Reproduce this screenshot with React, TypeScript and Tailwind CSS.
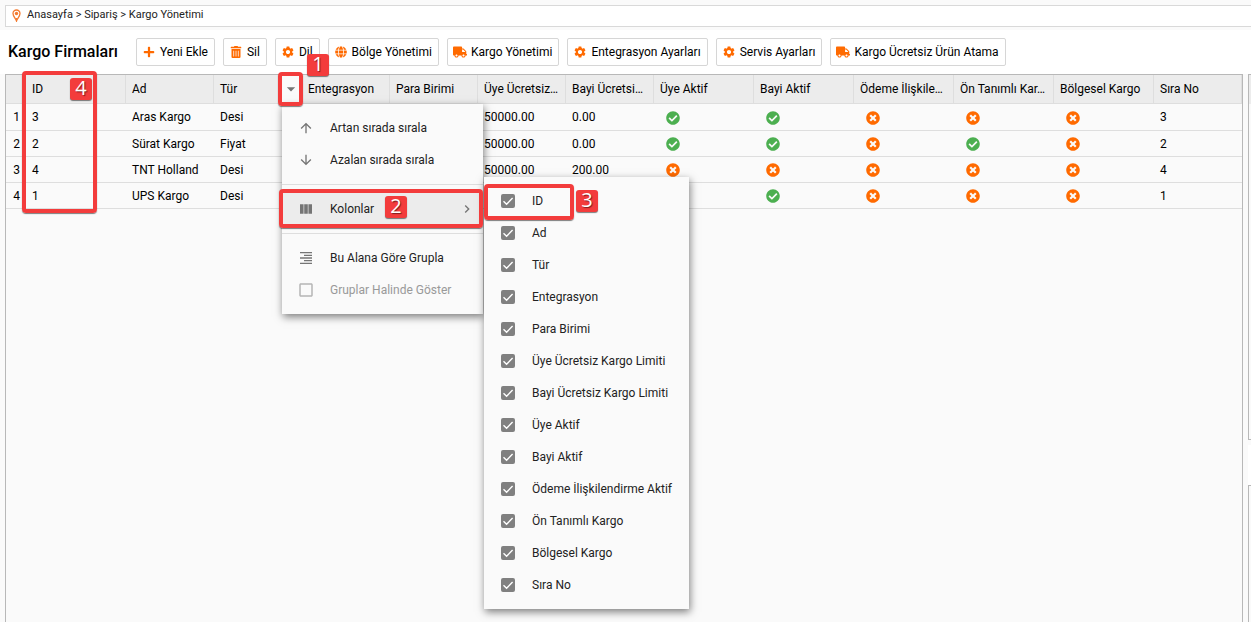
import type { ReactNode } from "react";
import { FaCheckCircle, FaGlobe, FaPlus, FaTimesCircle, FaTrashAlt, FaTruck } from "react-icons/fa";
import {
  MdArrowDownward,
  MdArrowDropDown,
  MdArrowUpward,
  MdCheckBoxOutlineBlank,
  MdChevronRight,
  MdFormatAlignRight,
  MdSettings,
  MdViewColumn,
} from "react-icons/md";
import { clsx } from "clsx";

const actions = [
  { label: "Yeni Ekle", icon: <FaPlus size={12} /> },
  { label: "Sil", icon: <FaTrashAlt size={12} /> },
  { label: "Dil", icon: <MdSettings size={14} /> },
  { label: "Bölge Yönetimi", icon: <FaGlobe size={12} /> },
  { label: "Kargo Yönetimi", icon: <FaTruck size={14} /> },
  { label: "Entegrasyon Ayarları", icon: <MdSettings size={14} /> },
  { label: "Servis Ayarları", icon: <MdSettings size={14} /> },
  { label: "Kargo Ücretsiz Ürün Atama", icon: <FaTruck size={14} /> },
];

// short is the heading used where the full label does not fit its column
const columns = [
  { label: "ID", width: "w-[100px]" },
  { label: "Ad", width: "w-[88px]" },
  { label: "Tür", width: "w-[88px]" },
  { label: "Entegrasyon", width: "w-[88px]" },
  { label: "Para Birimi", width: "w-[88px]" },
  { label: "Üye Ücretsiz Kargo Limiti", short: "Üye Ücretsiz…", width: "w-[88px]" },
  { label: "Bayi Ücretsiz Kargo Limiti", short: "Bayi Ücretsi…", width: "w-[88px]" },
  { label: "Üye Aktif", width: "w-[100px]" },
  { label: "Bayi Aktif", width: "w-[100px]" },
  { label: "Ödeme İlişkilendirme Aktif", short: "Ödeme İlişkile…", width: "w-[100px]" },
  { label: "Ön Tanımlı Kargo", short: "Ön Tanımlı Kar…", width: "w-[100px]" },
  { label: "Bölgesel Kargo", width: "w-[100px]" },
  { label: "Sıra No", width: "" },
];

const rows: (string | boolean)[][] = [
  ["3", "Aras Kargo", "Desi", "", "", "50000.00", "0.00", true, true, false, false, false, "3"],
  ["2", "Sürat Kargo", "Fiyat", "", "", "50000.00", "0.00", true, true, false, true, false, "2"],
  ["4", "TNT Holland", "Desi", "", "", "50000.00", "200.00", false, false, false, false, false, "4"],
  ["1", "UPS Kargo", "Desi", "", "", "", "", true, true, false, false, false, "1"],
];

function PinIcon() {
  return (
    <svg width="9" height="13" viewBox="0 0 9 13" fill="none" aria-hidden="true">
      <path
        d="M4.5 12C3.8 9.6 1 7.4 1 4.5a3.5 3.5 0 0 1 7 0C8 7.4 5.2 9.6 4.5 12Z"
        stroke="#f47b30"
        strokeWidth="1.3"
      />
      <circle cx="4.5" cy="4.5" r="1.7" fill="#f47b30" />
      <path d="M3.6 9h1.8L4.5 12.5Z" fill="#f47b30" />
    </svg>
  );
}

function Breadcrumb() {
  return (
    <nav className="mt-[5px] ml-[5px] flex h-[22px] items-center gap-[6px] border-y border-l border-[#d9d9d9] bg-white pl-[6px] pb-[2px] text-[11px] text-[#222]">
      <PinIcon />
      <span>
        <a href="#anasayfa">Anasayfa</a> &gt; <a href="#siparis">Sipariş</a> &gt;{" "}
        <a href="#kargo">Kargo Yönetimi</a>
      </span>
    </nav>
  );
}

function Toolbar() {
  return (
    <header className="mt-[3px] flex h-11 items-center gap-2 bg-white px-2">
      <h1 className="mr-[10px] text-[16px] font-medium whitespace-nowrap">Kargo Firmaları</h1>
      {actions.map((a) => (
        <button
          key={a.label}
          type="button"
          className="flex h-7 shrink-0 items-center gap-1 rounded-xs border border-[#d6d6d6] bg-white pr-[6px] pl-[5px] whitespace-nowrap"
        >
          <span className="flex w-[14px] justify-center text-[#ff6a00]">{a.icon}</span>
          {a.label}
        </button>
      ))}
    </header>
  );
}

function Cell({ value }: { value: string | boolean }) {
  if (typeof value === "string") {
    return <td className="truncate border-b border-[#dedede] px-[6px]">{value}</td>;
  }
  return (
    <td className="border-b border-[#dedede] pt-px pl-3">
      {value ? (
        <FaCheckCircle size={14} className="text-[#4caf50]" aria-label="Aktif" />
      ) : (
        <FaTimesCircle size={14} className="text-[#ff6a00]" aria-label="Pasif" />
      )}
    </td>
  );
}

function Grid() {
  return (
    <div className="min-w-0 flex-1 border-x border-t border-[#b8b8b8]">
      <table className="w-full table-fixed border-separate border-spacing-0 text-left">
        <thead>
          <tr className="h-[29px] bg-[#ececec]">
            <th className="w-5 border-b border-[#dedede]" aria-label="Sıra" />
            {columns.map((c, i) => (
              <th
                key={c.label}
                title={c.label}
                className={clsx(
                  "border-r border-b border-[#dedede] pl-[6px] font-normal whitespace-nowrap",
                  c.width,
                )}
              >
                {i === 2 ? (
                  <span className="flex items-center justify-between">
                    {c.label}
                    <button
                      type="button"
                      aria-label="Kolon menüsü"
                      className="flex h-7 w-5 items-center justify-center bg-[#fafafa] text-[#757575]"
                    >
                      <MdArrowDropDown size={20} className="shrink-0" />
                    </button>
                  </span>
                ) : (
                  (c.short ?? c.label)
                )}
              </th>
            ))}
          </tr>
        </thead>
        <tbody>
          {rows.map((row, i) => (
            <tr key={i} className="h-[26px] first:h-[27px]">
              <td className="border-b border-[#dedede] pr-[6px] text-right">{i + 1}</td>
              {row.map((value, j) => (
                <Cell key={j} value={value} />
              ))}
            </tr>
          ))}
        </tbody>
      </table>
    </div>
  );
}

function MenuItem({
  icon,
  children,
  className,
  disabled,
}: {
  icon: ReactNode;
  children: ReactNode;
  className?: string;
  disabled?: boolean;
}) {
  return (
    <button
      type="button"
      disabled={disabled}
      className={clsx("flex h-8 w-full items-center gap-4 pr-2 pl-4 text-left", className)}
    >
      <span className={clsx("flex w-4 justify-center", disabled ? "text-[#b5b5b5]" : "text-[#757575]")}>
        {icon}
      </span>
      {children}
    </button>
  );
}

function ColumnMenu() {
  return (
    <div className="absolute top-[104px] left-[282px] w-[201px] bg-[#fafafa] py-2 text-[#222] shadow-[1px_3px_8px_rgba(0,0,0,0.5)]">
      <MenuItem icon={<MdArrowUpward size={16} />}>Artan sırada sırala</MenuItem>
      <MenuItem icon={<MdArrowDownward size={16} />}>Azalan sırada sırala</MenuItem>
      <hr className="my-2 border-[#dedede]" />
      <MenuItem icon={<MdViewColumn size={16} />} className="bg-[#ececec]">
        <span className="flex-1">Kolonlar</span>
        <MdChevronRight size={16} className="text-[#757575]" />
      </MenuItem>
      <hr className="my-2 border-[#dedede]" />
      <MenuItem icon={<MdFormatAlignRight size={16} />}>Bu Alana Göre Grupla</MenuItem>
      <MenuItem icon={<MdCheckBoxOutlineBlank size={18} className="shrink-0" />} disabled className="text-[#999]">
        Gruplar Halinde Göster
      </MenuItem>
    </div>
  );
}

function ColumnList() {
  return (
    <div className="absolute top-[177px] left-[484px] w-[205px] bg-[#fafafa] py-2 text-[#222] shadow-[1px_3px_8px_rgba(0,0,0,0.5)]">
      {columns.map((c) => (
        <label key={c.label} className="flex h-8 items-center gap-[17px] pl-[17px] whitespace-nowrap">
          <span className="grid size-[14px] place-items-center">
            <input
              type="checkbox"
              defaultChecked
              className="peer col-start-1 row-start-1 size-[14px] appearance-none rounded-xs border-2 border-[#808080] checked:bg-[#808080]"
            />
            <svg
              viewBox="0 0 14 14"
              className="pointer-events-none col-start-1 row-start-1 hidden size-[14px] peer-checked:block"
              fill="none"
              stroke="#fff"
              strokeWidth="1.4"
              aria-hidden="true"
            >
              <path d="M2.5 7.2 5.6 10.2 11.6 4" />
            </svg>
          </span>
          {c.label}
        </label>
      ))}
    </div>
  );
}

// Numbered callouts that lie over the grid
const frames = [
  "top-[72px] left-[278px] h-[34px] w-[25px]",
  "top-[189px] left-[279px] h-[39px] w-[204px]",
  "top-[184px] left-[484px] h-[36px] w-[90px]",
  "top-[71px] left-[22px] h-[142px] w-[75px]",
];

const badges = [
  "top-[54px] left-[307px]",
  "top-[196px] left-[385px]",
  "top-[190px] left-[576px]",
  "top-[78px] left-[70px]",
];

function Callouts() {
  return (
    <>
      {frames.map((pos) => (
        <div
          key={pos}
          className={clsx(
            "pointer-events-none absolute rounded-[4px] border-4 border-[#f33c3c] shadow-[0_1px_1px_rgba(0,0,0,0.5)]",
            pos,
          )}
        />
      ))}
      {badges.map((pos, i) => (
        <span
          key={pos}
          className={clsx(
            "absolute flex h-[22px] w-[22px] items-center justify-center rounded-[3px] bg-[#f33c3c] pb-[2px] font-['Open_Sans',sans-serif] text-[20px] leading-5 text-white shadow-[0_1px_1px_rgba(0,0,0,0.5)] text-shadow-[1px_1px_1px_rgba(0,0,0,0.5)]",
            pos,
          )}
        >
          {i + 1}
        </span>
      ))}
    </>
  );
}

export default function App() {
  return (
    <div className="relative flex min-h-screen flex-col overflow-hidden bg-[#fafafa] font-[Roboto,sans-serif] text-[12px] leading-4 text-black">
      <Breadcrumb />
      <Toolbar />
      <main className="flex flex-1 gap-[5px] pl-[5px]">
        <Grid />
        <aside className="flex w-[3px] flex-col">
          <div className="h-[366px] border-y border-l border-[#b8b8b8]">
            <div className="h-[29px] bg-[#ececec]" />
          </div>
          <div className="mt-[5px] h-10 bg-white" />
          <div className="flex-1 border-t border-l border-[#b8b8b8]" />
        </aside>
      </main>
      <ColumnMenu />
      <ColumnList />
      <Callouts />
    </div>
  );
}
